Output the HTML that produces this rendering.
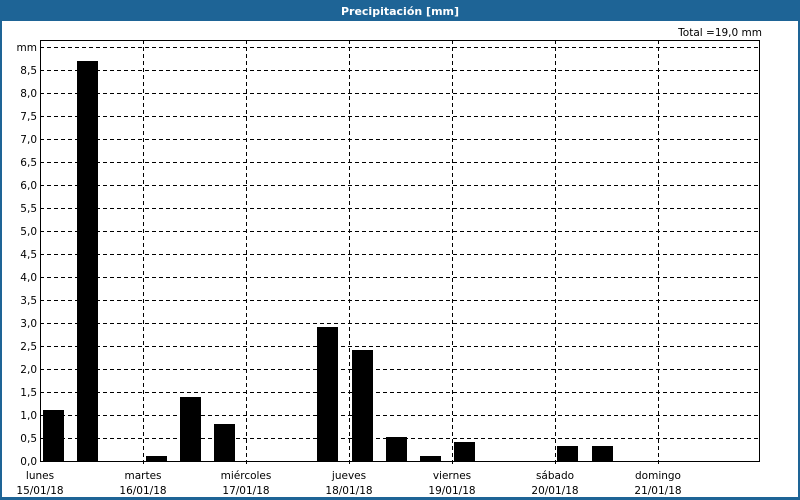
<!DOCTYPE html>
<html><head><style>
html,body{margin:0;padding:0;width:800px;height:500px;overflow:hidden;background:#fff;font-family:"DejaVu Sans","Liberation Sans",sans-serif}
</style></head><body>
<svg width="800" height="500" xmlns="http://www.w3.org/2000/svg" font-family="DejaVu Sans, Liberation Sans, sans-serif" font-size="10.5">
<rect x="0" y="0" width="800" height="500" fill="#1e6496"/>
<rect x="2" y="21" width="796" height="476" fill="#fff"/>
<text x="400" y="15" text-anchor="middle" fill="#fff" font-weight="bold" font-size="11">Precipitación [mm]</text>
<text x="762" y="36" text-anchor="end" fill="#000">Total =19,0 mm</text>
<g stroke="#000" stroke-width="1" stroke-dasharray="4,3">
<path d="M40 438.5H760M40 415.5H760M40 392.5H760M40 369.5H760M40 346.5H760M40 323.5H760M40 300.5H760M40 277.5H760M40 254.5H760M40 231.5H760M40 208.5H760M40 185.5H760M40 162.5H760M40 139.5H760M40 116.5H760M40 93.5H760M40 70.5H760M40 47.5H760"/>
<path d="M143.5 40V466M246.5 40V466M349.5 40V466M452.5 40V466M555.5 40V466M658.5 40V466"/>
</g>
<rect x="40.5" y="40.5" width="719" height="421" fill="none" stroke="#000"/>
<g fill="#000">
<rect x="43" y="410" width="21" height="51"/>
<rect x="77" y="61" width="21" height="400"/>
<rect x="146" y="456" width="21" height="5"/>
<rect x="180" y="397" width="21" height="64"/>
<rect x="214" y="424" width="21" height="37"/>
<rect x="317" y="327" width="21" height="134"/>
<rect x="352" y="350" width="21" height="111"/>
<rect x="386" y="437" width="21" height="24"/>
<rect x="420" y="456" width="21" height="5"/>
<rect x="454" y="442" width="21" height="19"/>
<rect x="557" y="446" width="21" height="15"/>
<rect x="592" y="446" width="21" height="15"/>
</g>
<g text-anchor="end" fill="#000">
<text x="37" y="465">0,0</text><text x="37" y="442">0,5</text><text x="37" y="419">1,0</text><text x="37" y="396">1,5</text><text x="37" y="373">2,0</text><text x="37" y="350">2,5</text><text x="37" y="327">3,0</text><text x="37" y="304">3,5</text><text x="37" y="281">4,0</text><text x="37" y="258">4,5</text><text x="37" y="235">5,0</text><text x="37" y="212">5,5</text><text x="37" y="189">6,0</text><text x="37" y="166">6,5</text><text x="37" y="143">7,0</text><text x="37" y="120">7,5</text><text x="37" y="97">8,0</text><text x="37" y="74">8,5</text><text x="37" y="51">mm</text>
</g>
<g text-anchor="middle" fill="#000">
<text x="40" y="479">lunes</text><text x="40" y="494">15/01/18</text>
<text x="143" y="479">martes</text><text x="143" y="494">16/01/18</text>
<text x="246" y="479">miércoles</text><text x="246" y="494">17/01/18</text>
<text x="349" y="479">jueves</text><text x="349" y="494">18/01/18</text>
<text x="452" y="479">viernes</text><text x="452" y="494">19/01/18</text>
<text x="555" y="479">sábado</text><text x="555" y="494">20/01/18</text>
<text x="658" y="479">domingo</text><text x="658" y="494">21/01/18</text>
</g>
</svg>
</body></html>
